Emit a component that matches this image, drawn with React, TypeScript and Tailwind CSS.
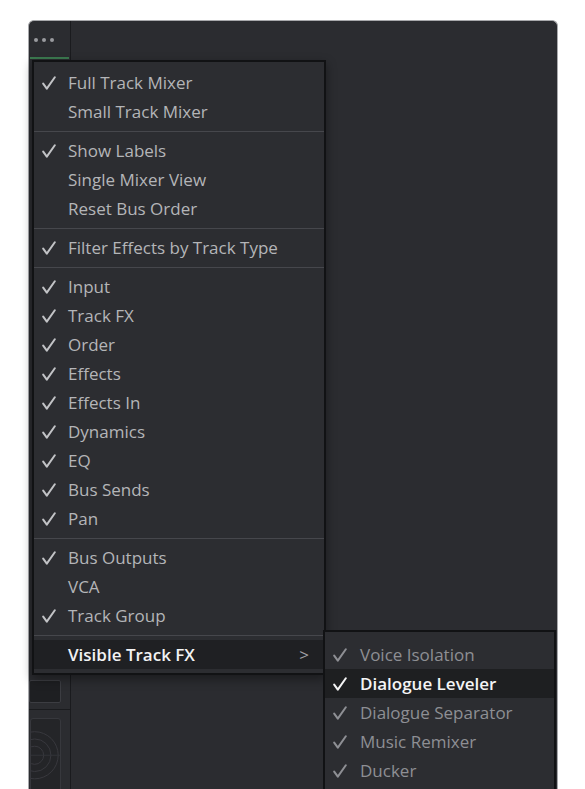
import React from "react";

type Item = { label: string; checked?: boolean } | "sep";

const mainItems: Item[] = [
  { label: "Full Track Mixer", checked: true },
  { label: "Small Track Mixer" },
  "sep",
  { label: "Show Labels", checked: true },
  { label: "Single Mixer View" },
  { label: "Reset Bus Order" },
  "sep",
  { label: "Filter Effects by Track Type", checked: true },
  "sep",
  { label: "Input", checked: true },
  { label: "Track FX", checked: true },
  { label: "Order", checked: true },
  { label: "Effects", checked: true },
  { label: "Effects In", checked: true },
  { label: "Dynamics", checked: true },
  { label: "EQ", checked: true },
  { label: "Bus Sends", checked: true },
  { label: "Pan", checked: true },
  "sep",
  { label: "Bus Outputs", checked: true },
  { label: "VCA" },
  { label: "Track Group", checked: true },
  "sep",
];

const fxItems = [
  { label: "Voice Isolation", active: false },
  { label: "Dialogue Leveler", active: true },
  { label: "Dialogue Separator", active: false },
  { label: "Music Remixer", active: false },
  { label: "Ducker", active: false },
];

function Check({ className }: { className?: string }) {
  return (
    <svg viewBox="0 0 14 14" className={className} fill="none">
      <path
        d="M1.2 7.6 L4.8 12.6 L12.8 1.2"
        stroke="currentColor"
        strokeWidth="2"
        strokeLinecap="round"
        strokeLinejoin="round"
      />
    </svg>
  );
}

function Separator() {
  return (
    <div className="h-[10px] flex items-center">
      <div className="h-px w-full bg-[#46474c]" />
    </div>
  );
}

export default function App() {
  return (
    <div className="relative w-[585px] h-[789px] overflow-hidden bg-white font-['Open_Sans',sans-serif]">
      {/* mixer window */}
      <div className="ml-[28px] pt-[20px]">
        <div className="w-[530px] h-[769px] rounded-t-[6px] border border-b-0 border-[#a8a9ac] bg-[#2b2c30] flex flex-col">
          {/* header */}
          <div className="h-[38px] flex shrink-0">
            <div className="w-[42px] border-r border-[#1a1b1e] flex flex-col">
              <div className="flex-1 flex items-center gap-[4px] pl-[5px] pt-[1px]">
                <span className="w-[4px] h-[4px] rounded-full bg-[#9a9b9f]" />
                <span className="w-[4px] h-[4px] rounded-full bg-[#9a9b9f]" />
                <span className="w-[4px] h-[4px] rounded-full bg-[#9a9b9f]" />
              </div>
              <div className="h-[2px] mx-[1px] bg-[#3c7a50]" />
            </div>
            <div className="flex-1" />
          </div>
          {/* body */}
          <div className="flex-1 flex">
            <div className="w-[42px] border-r border-[#1a1b1e] flex flex-col">
              <div className="h-[621px]" />
              <div className="h-[23px] mr-[9px] rounded-[2px] border border-[#3c3d42] bg-[#1e1f22]" />
              <div className="h-[7px] border-b border-[#1a1b1e]" />
              <div className="mt-[8px] mr-[9px] ml-[1px] flex-1 rounded-[3px] border border-[#37383d] bg-[#242528] overflow-hidden">
                <svg viewBox="0 0 32 80" className="w-full h-full" fill="none">
                  <circle cx="4" cy="40" r="10" stroke="#3a3b40" />
                  <circle cx="4" cy="40" r="18" stroke="#3a3b40" />
                  <circle cx="4" cy="40" r="26" stroke="#3a3b40" />
                  <line x1="0" y1="40" x2="32" y2="40" stroke="#34353a" />
                </svg>
              </div>
            </div>
            <div className="flex-1" />
          </div>
        </div>
      </div>

      {/* options menu */}
      <div className="absolute left-[32px] top-[60px] w-[294px] border-2 border-[#111214] bg-[#2c2d31] pt-[6px] pb-[4px] shadow-[0_4px_10px_rgba(0,0,0,0.4)]">
        {mainItems.map((it, i) =>
          it === "sep" ? (
            <Separator key={i} />
          ) : (
            <div key={i} className="h-[29px] flex items-center text-[17px] font-medium text-[#b4b5b8]">
              <div className="w-[34px] flex pl-[8px]">
                {it.checked && <Check className="w-[14px] h-[14px] text-[#c2c3c6]" />}
              </div>
              <span className="leading-none">{it.label}</span>
            </div>
          )
        )}
        <div className="h-[29px] flex items-center bg-[#1f2023] text-[17px] text-[#f2f2f3] font-semibold">
          <div className="w-[34px]" />
          <span className="flex-1 leading-none">Visible Track FX</span>
          <span className="pr-[15px] text-[#a0a1a5] font-normal text-[17px] leading-none">&gt;</span>
        </div>
      </div>

      {/* visible track fx submenu */}
      <div className="absolute left-[323px] top-[630px] w-[233px] h-[170px] border-2 border-[#111214] bg-[#2c2d31] pt-[8px]">
        {fxItems.map((it) => (
          <div
            key={it.label}
            className={
              it.active
                ? "h-[29px] flex items-center bg-[#1e1f21] text-[17px] text-[#f4f4f5] font-semibold"
                : "h-[29px] flex items-center text-[17px] font-medium text-[#8e8f94]"
            }
          >
            <div className="w-[35px] flex pl-[8px]">
              <Check className={it.active ? "w-[14px] h-[14px] text-[#f4f4f5]" : "w-[14px] h-[14px] text-[#8e8f94]"} />
            </div>
            <span className="leading-none">{it.label}</span>
          </div>
        ))}
      </div>
    </div>
  );
}
